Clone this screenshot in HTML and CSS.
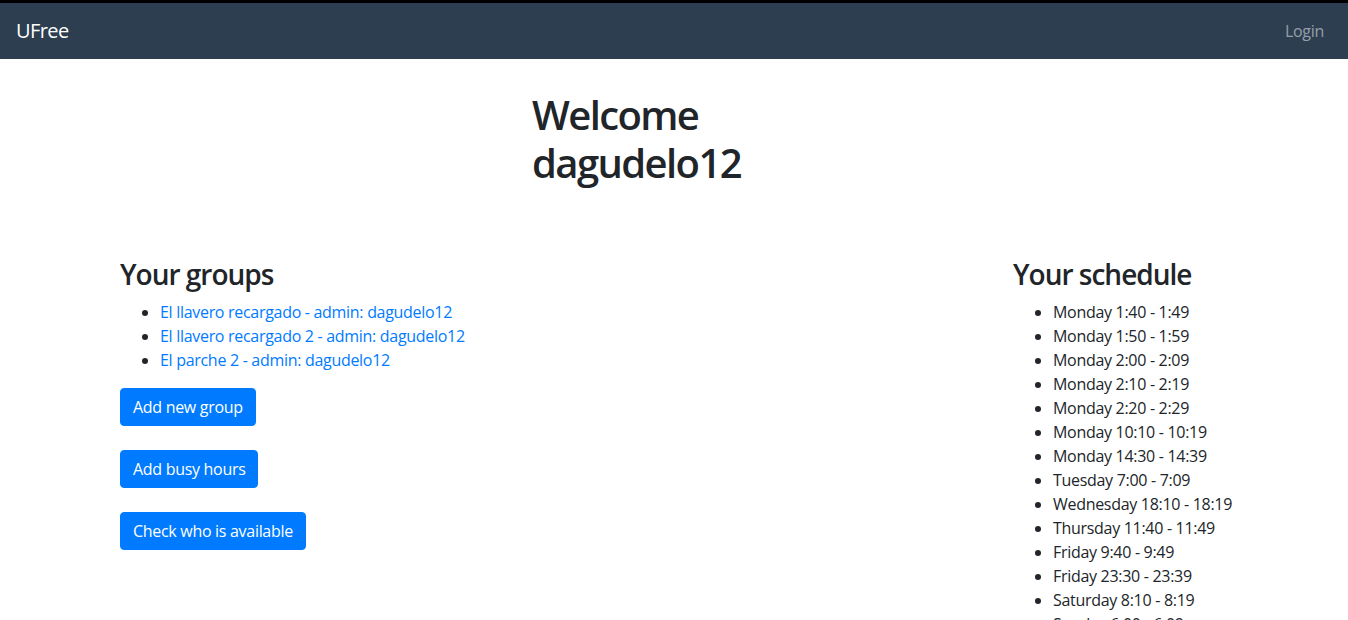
FILE: index.html
```html
<!DOCTYPE html>
<html lang="en">
<head>
<meta charset="utf-8">
<title>UFree</title>
<link rel="stylesheet" href="styles.css">
</head>
<body>
<nav class="navbar">
  <a class="brand" href="#">UFree</a>
  <a class="nav-link" href="#">Login</a>
</nav>
<main class="container">
  <div class="welcome-row">
    <h1 class="welcome">Welcome dagudelo12</h1>
  </div>
  <div class="content-row">
    <section class="groups">
      <h3>Your groups</h3>
      <ul class="group-list">
        <li><a href="#">El llavero recargado - admin: dagudelo12</a></li>
        <li><a href="#">El llavero recargado 2 - admin: dagudelo12</a></li>
        <li><a href="#">El parche 2 - admin: dagudelo12</a></li>
      </ul>
      <div class="btn-wrap"><a class="btn" href="#">Add new group</a></div>
      <div class="btn-wrap"><a class="btn" href="#">Add busy hours</a></div>
      <div class="btn-wrap"><a class="btn" href="#">Check who is available</a></div>
    </section>
    <section class="schedule">
      <h3>Your schedule</h3>
      <ul class="schedule-list">
        <li>Monday 1:40 - 1:49</li>
        <li>Monday 1:50 - 1:59</li>
        <li>Monday 2:00 - 2:09</li>
        <li>Monday 2:10 - 2:19</li>
        <li>Monday 2:20 - 2:29</li>
        <li>Monday 10:10 - 10:19</li>
        <li>Monday 14:30 - 14:39</li>
        <li>Tuesday 7:00 - 7:09</li>
        <li>Wednesday 18:10 - 18:19</li>
        <li>Thursday 11:40 - 11:49</li>
        <li>Friday 9:40 - 9:49</li>
        <li>Friday 23:30 - 23:39</li>
        <li>Saturday 8:10 - 8:19</li>
        <li>Sunday 6:00 - 6:09</li>
      </ul>
    </section>
  </div>
</main>
</body>
</html>
```
FILE: styles.css
```css
* { box-sizing: border-box; }
html, body { margin: 0; padding: 0; }
body {
  font-family: "Open Sans", "Noto Sans", "Liberation Sans", sans-serif;
  font-size: 16px;
  line-height: 1.5;
  letter-spacing: -0.3px;
  color: #212529;
  background: #fff;
  border-top: 3px solid #000;
}
a { text-decoration: none; }

.navbar {
  height: 56px;
  background: #2c3e50;
  display: flex;
  align-items: center;
  justify-content: space-between;
  padding: 0 16px;
}
.brand {
  color: #fff;
  font-size: 20px;
  line-height: 30px;
  letter-spacing: -0.6px;
}
.nav-link {
  color: rgba(255,255,255,.5);
  padding: 8px;
  line-height: 24px;
}

.container {
  width: 1110px;
  margin: 0 auto;
}
.welcome-row {
  display: flex;
  justify-content: center;
  padding-top: 32px;
}
.welcome {
  width: 284px;
  margin: 0;
  font-size: 40px;
  line-height: 48px;
  font-weight: 600;
  letter-spacing: -1.6px;
}
.content-row {
  display: flex;
  margin-top: 71px;
}
.groups { flex: 1; padding-left: 1px; }
.schedule { width: 216px; }
h3 {
  font-size: 28px;
  font-weight: 600;
  line-height: 33.6px;
  letter-spacing: -1px;
  margin: 0 0 8px;
}
ul {
  margin: 0 0 16px;
  padding-left: 40px;
}
.schedule-list li { white-space: nowrap; }
.group-list a { color: #007bff; }
.btn-wrap { margin-bottom: 24px; }
.btn {
  display: inline-block;
  background: #007bff;
  color: #fff;
  border: 1px solid #007bff;
  border-radius: 4px;
  padding: 6px 12px;
  line-height: 24px;
  font-size: 16px;
}
```
